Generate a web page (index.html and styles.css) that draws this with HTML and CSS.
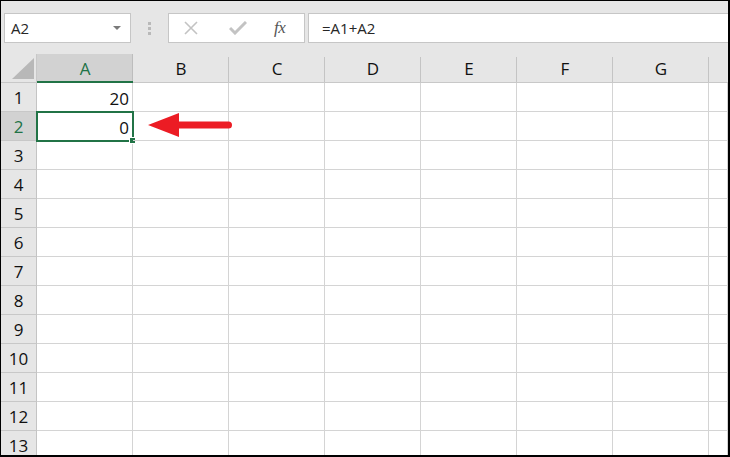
FILE: index.html
```html
<!DOCTYPE html>
<html>
<head>
<meta charset="utf-8">
<link rel="stylesheet" href="styles.css">
</head>
<body>
<div class="frame">
  <div class="toolbar">
    <div class="namebox">
      <span class="name">A2</span>
      <svg class="dd" width="8" height="5" viewBox="0 0 8 5"><path d="M0 0H8L4 4Z" fill="#7a7a7a"/></svg>
    </div>
    <div class="dots"><i></i><i></i><i></i></div>
    <div class="fnbox">
      <svg class="ic" width="16" height="16" viewBox="0 0 16 16"><path d="M2 2L14 14M14 2L2 14" stroke="#c3c3c3" stroke-width="1.6" fill="none"/></svg>
      <svg class="ic" width="18" height="14" viewBox="0 0 18 14"><path d="M1 7L6 12L17 1" stroke="#c3c3c3" stroke-width="3" fill="none"/></svg>
      <span class="fx">fx</span>
    </div>
    <div class="formula">=A1+A2</div>
  </div>
  <div class="grid">
    <div class="corner"><svg width="22" height="21" viewBox="0 0 22 21"><path d="M22 0V21H0Z" fill="#b8b8b8"/></svg></div>
    <div class="ch sel">A</div><div class="ch">B</div><div class="ch">C</div><div class="ch">D</div><div class="ch">E</div><div class="ch">F</div><div class="ch">G</div><div class="ch last"></div>

    <div class="rh">1</div><div class="c num">20</div><div class="c"></div><div class="c"></div><div class="c"></div><div class="c"></div><div class="c"></div><div class="c"></div><div class="c"></div>
    <div class="rh sel">2</div><div class="c num active">0<span class="handle"></span></div><div class="c arrowcell"><svg class="arrow" width="84" height="26" viewBox="0 0 84 26"><path d="M0 13L31 1V9.5H80.5A3.5 3.5 0 0 1 80.5 16.5H31V25Z" fill="#ec1c24"/></svg></div><div class="c"></div><div class="c"></div><div class="c"></div><div class="c"></div><div class="c"></div><div class="c"></div>
    <div class="rh">3</div><div class="c"></div><div class="c"></div><div class="c"></div><div class="c"></div><div class="c"></div><div class="c"></div><div class="c"></div><div class="c"></div>
    <div class="rh">4</div><div class="c"></div><div class="c"></div><div class="c"></div><div class="c"></div><div class="c"></div><div class="c"></div><div class="c"></div><div class="c"></div>
    <div class="rh">5</div><div class="c"></div><div class="c"></div><div class="c"></div><div class="c"></div><div class="c"></div><div class="c"></div><div class="c"></div><div class="c"></div>
    <div class="rh">6</div><div class="c"></div><div class="c"></div><div class="c"></div><div class="c"></div><div class="c"></div><div class="c"></div><div class="c"></div><div class="c"></div>
    <div class="rh">7</div><div class="c"></div><div class="c"></div><div class="c"></div><div class="c"></div><div class="c"></div><div class="c"></div><div class="c"></div><div class="c"></div>
    <div class="rh">8</div><div class="c"></div><div class="c"></div><div class="c"></div><div class="c"></div><div class="c"></div><div class="c"></div><div class="c"></div><div class="c"></div>
    <div class="rh">9</div><div class="c"></div><div class="c"></div><div class="c"></div><div class="c"></div><div class="c"></div><div class="c"></div><div class="c"></div><div class="c"></div>
    <div class="rh">10</div><div class="c"></div><div class="c"></div><div class="c"></div><div class="c"></div><div class="c"></div><div class="c"></div><div class="c"></div><div class="c"></div>
    <div class="rh">11</div><div class="c"></div><div class="c"></div><div class="c"></div><div class="c"></div><div class="c"></div><div class="c"></div><div class="c"></div><div class="c"></div>
    <div class="rh">12</div><div class="c"></div><div class="c"></div><div class="c"></div><div class="c"></div><div class="c"></div><div class="c"></div><div class="c"></div><div class="c"></div>
    <div class="rh">13</div><div class="c"></div><div class="c"></div><div class="c"></div><div class="c"></div><div class="c"></div><div class="c"></div><div class="c"></div><div class="c"></div>
  </div>
</div>
</body>
</html>
```

FILE: styles.css
```css
* { box-sizing: border-box; }
html, body { margin: 0; padding: 0; background: #fff; }
body { font-family: "Open Sans", "Liberation Sans", sans-serif; color: #111; }

.frame {
  width: 730px;
  height: 457px;
  border-top: 1px solid #000;
  border-left: 1px solid #000;
  border-right: 2px solid #000;
  border-bottom: 2px solid #000;
  overflow: hidden;
  background: #e6e6e6;
}

.toolbar {
  height: 53px;
  display: flex;
  align-items: flex-start;
  padding-top: 12px;
  padding-left: 3px;
  background: #e6e6e6;
}

.namebox {
  width: 127px;
  height: 30px;
  background: #fff;
  border: 1px solid #c6c6c6;
  display: flex;
  align-items: center;
  justify-content: space-between;
  padding: 0 9px 0 6px;
  font-size: 15px;
  color: #262626;
}
.dd { margin-top: 1px; }

.dots {
  width: 37px;
  height: 30px;
  display: flex;
  flex-direction: column;
  align-items: center;
  justify-content: center;
  gap: 2px;
}
.dots i { display: block; width: 3px; height: 3px; background: #b9b9b9; }

.fnbox {
  width: 137px;
  height: 30px;
  background: #fff;
  border: 1px solid #c6c6c6;
  display: flex;
  align-items: center;
  padding-left: 14px;
  gap: 0;
}
.fnbox .ic:first-child { margin-right: 30px; }
.fnbox .ic:nth-child(2) { margin-right: 27px; }
.fx {
  font-family: "Liberation Serif", "DejaVu Serif", serif;
  font-style: italic;
  font-size: 17px;
  color: #555;
  letter-spacing: -0.5px;
}

.formula {
  margin-left: 3px;
  flex: 1;
  height: 30px;
  background: #fff;
  border: 1px solid #c6c6c6;
  border-right: none;
  display: flex;
  align-items: center;
  padding-left: 13px;
  font-size: 15px;
  color: #262626;
}

.grid {
  display: grid;
  grid-template-columns: 36px repeat(7, 96px) 1fr;
  grid-auto-rows: 29px;
  background: #fff;
}

.corner {
  background: #e6e6e6;
  border-right: 1px solid #c8c8c8;
  border-bottom: 1px solid #c8c8c8;
  display: flex;
  align-items: flex-end;
  justify-content: flex-end;
  padding: 0 2px 3px 0;
}

.ch {
  background: #e6e6e6;
  border-bottom: 1px solid #c8c8c8;
  position: relative;
  display: flex;
  align-items: center;
  justify-content: center;
  font-size: 17px;
  color: #111;
  padding-top: 1px;
}
.ch::after {
  content: "";
  position: absolute;
  right: 0;
  top: 3px;
  bottom: 0;
  width: 1px;
  background: #c4c4c4;
}
.ch.last::after { display: none; }
.ch.sel {
  background: #d2d2d2;
  color: #217346;
  border-bottom: 2px solid #217346;
}
.ch.sel::after { top: 0; background: #bdbdbd; }

.rh {
  background: #e6e6e6;
  border-right: 1px solid #c4c4c4;
  border-bottom: 1px solid #c8c8c8;
  display: flex;
  align-items: center;
  justify-content: center;
  font-size: 17px;
  color: #111;
  padding-top: 1px;
}
.rh.sel { background: #d2d2d2; color: #217346; }

.c {
  border-right: 1px solid #d4d4d4;
  border-bottom: 1px solid #d4d4d4;
  position: relative;
}
.num {
  display: flex;
  align-items: center;
  justify-content: flex-end;
  padding-right: 3px;
  padding-top: 2px;
  font-size: 17px;
  color: #111;
}
.active {
  outline: 2px solid #217346;
  outline-offset: -1px;
  z-index: 2;
}
.handle {
  position: absolute;
  right: -4px;
  bottom: -4px;
  width: 6px;
  height: 6px;
  background: #217346;
  border: 1px solid #fff;
  box-sizing: content-box;
  width: 5px;
  height: 5px;
  right: -4px;
  bottom: -4px;
}
.arrowcell { z-index: 3; }
.arrow {
  position: absolute;
  left: 15px;
  top: 0px;
}
```
